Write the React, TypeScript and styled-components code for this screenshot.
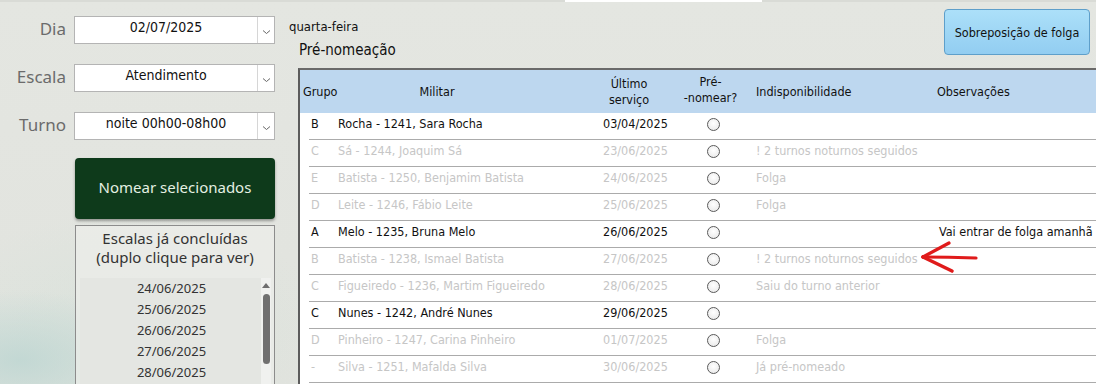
import styled, { createGlobalStyle } from "styled-components";

const GlobalStyle = createGlobalStyle`
  html, body { margin: 0; padding: 0; }
  body { width: 1096px; height: 384px; overflow: hidden; }
`;

const TABLE_FONT = `"DejaVu Sans Condensed", "DejaVu Sans", sans-serif`;
const UI_FONT = `"Noto Sans", "Open Sans", sans-serif`;

interface IRow {
  grupo: string;
  militar: string;
  ultimo: string;
  indisp: string;
  obs: string;
  faded: boolean;
}

const rows: IRow[] = [
  { grupo: "B", militar: "Rocha - 1241, Sara Rocha", ultimo: "03/04/2025", indisp: "", obs: "", faded: false },
  { grupo: "C", militar: "Sá - 1244, Joaquim Sá", ultimo: "23/06/2025", indisp: "! 2 turnos noturnos seguidos", obs: "", faded: true },
  { grupo: "E", militar: "Batista - 1250, Benjamim Batista", ultimo: "24/06/2025", indisp: "Folga", obs: "", faded: true },
  { grupo: "D", militar: "Leite - 1246, Fábio Leite", ultimo: "25/06/2025", indisp: "Folga", obs: "", faded: true },
  { grupo: "A", militar: "Melo - 1235, Bruna Melo", ultimo: "26/06/2025", indisp: "", obs: "Vai entrar de folga amanhã", faded: false },
  { grupo: "B", militar: "Batista - 1238, Ismael Batista", ultimo: "27/06/2025", indisp: "! 2 turnos noturnos seguidos", obs: "", faded: true },
  { grupo: "C", militar: "Figueiredo - 1236, Martim Figueiredo", ultimo: "28/06/2025", indisp: "Saiu do turno anterior", obs: "", faded: true },
  { grupo: "C", militar: "Nunes - 1242, André Nunes", ultimo: "29/06/2025", indisp: "", obs: "", faded: false },
  { grupo: "D", militar: "Pinheiro - 1247, Carina Pinheiro", ultimo: "01/07/2025", indisp: "Folga", obs: "", faded: true },
  { grupo: "-", militar: "Silva - 1251, Mafalda Silva", ultimo: "30/06/2025", indisp: "Já pré-nomeado", obs: "", faded: true },
  { grupo: "", militar: "", ultimo: "", indisp: "", obs: "", faded: true },
];

const concluidas = ["24/06/2025", "25/06/2025", "26/06/2025", "27/06/2025", "28/06/2025"];

const Chevron = () => (
  <svg width="9" height="6" viewBox="0 0 9 6">
    <path d="M1 1.5 L4.5 4.5 L8 1.5" fill="none" stroke="#666" strokeWidth="1" />
  </svg>
);

const Combo = ({ value }: { value: string }) => (
  <ComboBox>
    <ComboValue>{value}</ComboValue>
    <ComboArrow>
      <Chevron />
    </ComboArrow>
  </ComboBox>
);

const App = () => {
  return (
    <Page>
      <GlobalStyle />
      <TopStrip>
        <TopStripTab />
      </TopStrip>
      <Main>
        <LeftPanel>
          <FormGrid>
            <FieldLabel>Dia</FieldLabel>
            <Combo value="02/07/2025" />
            <FieldLabel>Escala</FieldLabel>
            <Combo value="Atendimento" />
            <FieldLabel>Turno</FieldLabel>
            <Combo value="noite 00h00-08h00" />
          </FormGrid>
          <NomearButton>Nomear selecionados</NomearButton>
          <ListBox>
            <ListTitle>
              Escalas já concluídas
              <br />
              (duplo clique para ver)
            </ListTitle>
            <DateArea>
              <DateList>
                {concluidas.map((d) => (
                  <DateItem key={d}>{d}</DateItem>
                ))}
              </DateList>
              <ScrollTrack>
                <ScrollArrow />
                <ScrollThumb />
              </ScrollTrack>
            </DateArea>
          </ListBox>
        </LeftPanel>

        <RightPanel>
          <TopRow>
            <HeadTexts>
              <DayName>quarta-feira</DayName>
              <SectionTitle>Pré-nomeação</SectionTitle>
            </HeadTexts>
            <FolgaButton>Sobreposição de folga</FolgaButton>
          </TopRow>
          <Table>
            <HeaderRow>
              <HeadCell align="left" pad="0 0 0 3px">Grupo</HeadCell>
              <HeadCell align="center" pad="0 50px 0 0">Militar</HeadCell>
              <HeadCell align="center" pad="0 12px 0 0">
                Último
                <br />
                serviço
              </HeadCell>
              <HeadCell align="center" pad="0 4px 4px 0">
                Pré-
                <br />
                -nomear?
              </HeadCell>
              <HeadCell align="left" pad="0 0 0 11px">Indisponibilidade</HeadCell>
              <HeadCell align="left" pad="0 0 0 7px">Observações</HeadCell>
            </HeaderRow>
            {rows.map((r, i) => (
              <BodyRow key={i} faded={r.faded}>
                <Cell pad="0 0 0 2px">{r.grupo}</Cell>
                <Cell pad="0 0 0 4px">{r.militar}</Cell>
                <Cell pad="0 0 0 13px">{r.ultimo}</Cell>
                <RadioCell>{r.ultimo && <Radio />}</RadioCell>
                <Cell pad="0 0 0 11px">{r.indisp}</Cell>
                <Cell pad="0 0 0 9px">{r.obs}</Cell>
              </BodyRow>
            ))}
          </Table>
        </RightPanel>
      </Main>

      <Annotation width="64" height="40" viewBox="0 0 64 40">
        <path d="M5 19 Q30 19 58 20" fill="none" stroke="#e01b1b" strokeWidth="3.2" strokeLinecap="round" />
        <path d="M5 19 L31 5" fill="none" stroke="#e01b1b" strokeWidth="3.2" strokeLinecap="round" />
        <path d="M5 19 L34 33" fill="none" stroke="#e01b1b" strokeWidth="3.6" strokeLinecap="round" />
      </Annotation>
    </Page>
  );
};

const Page = styled.div`
  position: relative;
  width: 1096px;
  height: 384px;
  overflow: hidden;
  display: flex;
  flex-direction: column;
  background:
    radial-gradient(ellipse 140px 70px at 20px 360px, rgba(190, 214, 210, 0.85), transparent),
    radial-gradient(ellipse 200px 120px at 130px 330px, rgba(214, 226, 218, 0.7), transparent),
    linear-gradient(180deg, #e4e6e1 0%, #e1e3de 100%);
`;

const TopStrip = styled.div`
  height: 2px;
  flex-shrink: 0;
  background: #d9dbd6;
  display: flex;
`;

const TopStripTab = styled.div`
  margin-left: 565px;
  width: 197px;
  background: #ffffff;
`;

const Main = styled.div`
  flex: 1;
  display: flex;
  min-height: 0;
`;

const LeftPanel = styled.div`
  width: 275px;
  flex-shrink: 0;
  padding-top: 14px;
  display: flex;
  flex-direction: column;
  min-height: 0;
`;

const FormGrid = styled.div`
  flex-shrink: 0;
  display: grid;
  grid-template-columns: 66px 201px;
  column-gap: 8px;
  row-gap: 20px;
`;

const FieldLabel = styled.div`
  font-family: ${UI_FONT};
  font-size: 17px;
  color: #6b6b6b;
  text-align: right;
  line-height: 26px;
`;

const ComboBox = styled.div`
  display: flex;
  height: 28px;
  box-sizing: border-box;
  background: #ffffff;
  border: 1px solid #b4b4b4;
`;

const ComboValue = styled.div`
  flex: 1;
  text-align: center;
  font-family: ${TABLE_FONT};
  font-size: 14px;
  line-height: 20px;
  color: #111;
`;

const ComboArrow = styled.div`
  width: 16px;
  border-left: 1px solid #d6d6d6;
  display: flex;
  align-items: center;
  justify-content: center;
  padding-top: 3px;
`;

const NomearButton = styled.div`
  flex-shrink: 0;
  margin: 18px 0 0 75px;
  width: 200px;
  height: 61px;
  box-sizing: border-box;
  background: #0e3a1b;
  border-radius: 4px;
  box-shadow: 0 2px 3px rgba(0, 0, 0, 0.35);
  display: flex;
  align-items: center;
  justify-content: center;
  font-family: ${UI_FONT};
  font-size: 15px;
  color: #e4f0e2;
  padding-bottom: 4px;
`;

const ListBox = styled.div`
  margin: 6px 0 0 75px;
  width: 200px;
  flex: 1;
  min-height: 0;
  overflow: hidden;
  box-sizing: border-box;
  border: 1px solid #8c8c8c;
  border-bottom: none;
  background: rgba(236, 238, 234, 0.75);
  display: flex;
  flex-direction: column;
`;

const ListTitle = styled.div`
  flex-shrink: 0;
  padding-top: 3px;
  text-align: center;
  font-family: ${UI_FONT};
  font-size: 15px;
  line-height: 19px;
  color: #333;
`;

const DateArea = styled.div`
  margin: 11px 3px 0 4px;
  flex: 1;
  display: flex;
  background: #e4e6e2;
`;

const DateList = styled.div`
  flex: 1;
  display: flex;
  flex-direction: column;
  align-items: center;
  padding-left: 2px;
`;

const DateItem = styled.div`
  font-family: ${UI_FONT};
  font-size: 13px;
  line-height: 21px;
  color: #333;
`;

const ScrollTrack = styled.div`
  width: 10px;
  background: #f0f1ef;
  display: flex;
  flex-direction: column;
  align-items: center;
  padding-top: 5px;
`;

const ScrollArrow = styled.div`
  width: 0;
  height: 0;
  border-left: 4px solid transparent;
  border-right: 4px solid transparent;
  border-bottom: 5px solid #6e6e6e;
`;

const ScrollThumb = styled.div`
  margin-top: 6px;
  width: 7px;
  height: 70px;
  border-radius: 4px;
  background: #707070;
`;

const RightPanel = styled.div`
  flex: 1;
  margin-left: 14px;
  display: flex;
  flex-direction: column;
  min-width: 0;
  min-height: 0;
`;

const TopRow = styled.div`
  flex-shrink: 0;
  height: 66px;
  display: flex;
  justify-content: space-between;
  align-items: flex-start;
`;

const HeadTexts = styled.div`
  display: flex;
  flex-direction: column;
`;

const DayName = styled.div`
  margin-top: 17px;
  font-family: ${TABLE_FONT};
  font-size: 13px;
  line-height: 15px;
  color: #111;
`;

const SectionTitle = styled.div`
  margin: 7px 0 0 10px;
  font-family: ${TABLE_FONT};
  font-size: 15px;
  line-height: 18px;
  color: #111;
`;

const FolgaButton = styled.div`
  margin: 7px 6px 0 0;
  width: 146px;
  height: 46px;
  box-sizing: border-box;
  border: 1px solid #5e9fca;
  border-radius: 4px;
  background: linear-gradient(180deg, #ace0f9 0%, #92cdf1 100%);
  display: flex;
  align-items: center;
  justify-content: center;
  font-family: ${TABLE_FONT};
  font-size: 12.5px;
  color: #111;
`;

const COLS = "256px 90px 65px 185px 200px";

const Table = styled.div`
  margin-left: 9px;
  width: 840px;
  flex: 1;
  min-height: 0;
  overflow: hidden;
  background: #ffffff;
  border-left: 2px solid #5c5c5c;
  border-top: 2px solid #6a6a6a;
  font-family: ${TABLE_FONT};
  font-size: 12.5px;
`;

const HeaderRow = styled.div`
  display: grid;
  grid-template-columns: 34px ${COLS};
  height: 43px;
  background: #bdd7ef;
  color: #111;
`;

const HeadCell = styled.div<{ align: "left" | "center"; pad: string }>`
  display: flex;
  align-items: center;
  justify-content: ${({ align }) => (align === "center" ? "center" : "flex-start")};
  text-align: ${({ align }) => align};
  padding: ${({ pad }) => pad};
  line-height: 16px;
  white-space: nowrap;
`;

const BodyRow = styled.div<{ faded: boolean }>`
  margin-left: 9px;
  display: grid;
  grid-template-columns: 25px ${COLS};
  height: 27px;
  box-sizing: border-box;
  border-bottom: 1px solid #ababab;
  color: ${({ faded }) => (faded ? "#c6c6c6" : "#111111")};
`;

const Cell = styled.div<{ pad: string }>`
  display: flex;
  align-items: center;
  padding: ${({ pad }) => pad};
  padding-bottom: 6px;
  white-space: nowrap;
  overflow: visible;
`;

const RadioCell = styled.div`
  display: flex;
  align-items: center;
  justify-content: center;
  padding: 0 0 3px 2px;
`;

const Radio = styled.div`
  width: 13px;
  height: 13px;
  box-sizing: border-box;
  border-radius: 50%;
  border: 1px solid #5a5a5a;
  background: radial-gradient(circle at 50% 40%, #ffffff 0%, #e6e6e6 100%);
`;

const Annotation = styled.svg`
  position: absolute;
  left: 918px;
  top: 238px;
`;

export default App;
